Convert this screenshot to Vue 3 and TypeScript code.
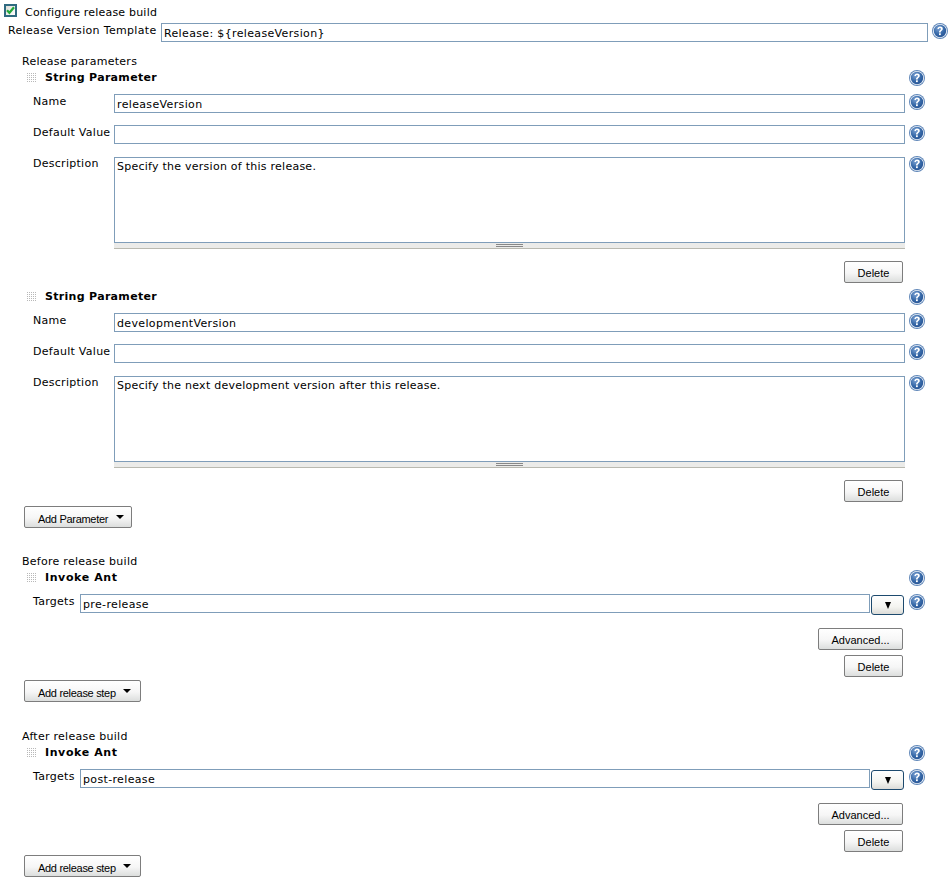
<script setup lang="ts">
interface Param { name: string; description: string }
interface Step { label: string; target: string }

const params: Param[] = [
  { name: 'releaseVersion', description: 'Specify the version of this release.' },
  { name: 'developmentVersion', description: 'Specify the next development version after this release.' },
]
const steps: Step[] = [
  { label: 'Before release build', target: 'pre-release' },
  { label: 'After release build', target: 'post-release' },
]
</script>

<template>
  <div class="page">
    <svg width="0" height="0" class="defs">
      <defs>
        <radialGradient id="helpFill" cx="38%" cy="30%" r="80%">
          <stop offset="0" stop-color="#7ba1d2" />
          <stop offset="0.55" stop-color="#386aa9" />
          <stop offset="1" stop-color="#234f90" />
        </radialGradient>
        <symbol id="help" viewBox="0 0 16 16">
          <circle cx="8" cy="8" r="8" fill="#5f86b8" />
          <circle cx="8" cy="8" r="7.1" fill="#eef3f9" />
          <circle cx="8" cy="8" r="6.2" fill="url(#helpFill)" />
          <path d="M5.4 6C5.5 4.4 6.7 3.5 8.1 3.5c1.6 0 2.7.9 2.7 2.3 0 1.1-.7 1.7-1.4 2.2-.5.4-.7.7-.7 1.4H7c0-1.1.3-1.7 1-2.2.5-.4.9-.8.9-1.3 0-.6-.3-.9-.9-.9-.7 0-1 .5-1.1 1.1z" fill="#fff" />
          <rect x="7" y="10.3" width="1.8" height="1.8" fill="#fff" />
        </symbol>
      </defs>
    </svg>

    <div class="check-row">
      <span class="checkbox">
        <svg width="9" height="9" viewBox="0 0 9 9"><path d="M1 4.2l2.4 2.6L8 1.2" fill="none" stroke="#22a838" stroke-width="2.2" /></svg>
      </span>
      <span class="check-text">Configure release build</span>
    </div>

    <div class="template-row">
      <label>Release Version Template</label>
      <input class="field" value="Release: ${releaseVersion}" />
      <svg class="help"><use href="#help" /></svg>
    </div>

    <section class="section first">
      <div class="section-label">Release parameters</div>
      <div v-for="p in params" :key="p.name" class="chunk">
        <div class="chunk-head">
          <span class="handle"></span>
          <b>String Parameter</b>
          <svg class="help"><use href="#help" /></svg>
        </div>
        <div class="form-row name">
          <label>Name</label>
          <input class="field" :value="p.name" />
          <svg class="help"><use href="#help" /></svg>
        </div>
        <div class="form-row">
          <label>Default Value</label>
          <input class="field" value="" />
          <svg class="help"><use href="#help" /></svg>
        </div>
        <div class="form-row desc">
          <label>Description</label>
          <div class="area-wrap">
            <textarea class="area" :value="p.description"></textarea>
            <div class="grip"><i></i></div>
          </div>
          <svg class="help"><use href="#help" /></svg>
        </div>
        <div class="actions">
          <button class="btn delete">Delete</button>
        </div>
      </div>
      <button class="btn add param">Add Parameter<span class="caret"></span></button>
    </section>

    <section v-for="s in steps" :key="s.label" class="section step">
      <div class="section-label">{{ s.label }}</div>
      <div class="chunk">
        <div class="chunk-head">
          <span class="handle"></span>
          <b class="ant">Invoke Ant</b>
          <svg class="help"><use href="#help" /></svg>
        </div>
        <div class="target-row">
          <label>Targets</label>
          <input class="field" :value="s.target" />
          <button class="drop"><span class="caret"></span></button>
          <svg class="help"><use href="#help" /></svg>
        </div>
        <div class="actions adv">
          <button class="btn advanced">Advanced...</button>
        </div>
        <div class="actions del">
          <button class="btn delete">Delete</button>
        </div>
      </div>
      <button class="btn add release">Add release step<span class="caret"></span></button>
    </section>
  </div>
</template>

<style>
html, body { background: #fff; }
</style>

<style scoped>
.page {
  width: 952px;
  height: 882px;
  overflow: hidden;
  position: relative;
  background: #fff;
  color: #000;
  font: 11px/14px "DejaVu Sans", Verdana, sans-serif;
  letter-spacing: 0.27px;
}
.defs { position: absolute; }
.help { width: 16px; height: 16px; flex: none; display: block; }
.check-row {
  height: 23px;
  padding: 4px 0 0 4px;
  box-sizing: border-box;
  display: flex;
  align-items: flex-start;
  gap: 8px;
  line-height: 16px;
}
.check-text { margin-top: 1px; letter-spacing: 0.2px; }
.checkbox {
  width: 13px;
  height: 13px;
  box-sizing: border-box;
  border: 2px solid #2f6a80;
  background: linear-gradient(135deg, #dcdcd6, #fff);
  display: flex;
  flex: none;
}
.checkbox svg { display: block; }
.field {
  font: 11px "DejaVu Sans", Verdana, sans-serif;
  letter-spacing: 0.35px;
  color: #000;
  border: 1px solid #7f9db9;
  height: 19px;
  box-sizing: border-box;
  padding: 2px 2px 0;
  margin: 0;
  background: #fff;
  outline: none;
  min-width: 0;
}
.template-row {
  display: flex;
  height: 19px;
  padding-left: 8px;
  width: 948px;
  box-sizing: border-box;
}
.template-row label { width: 153px; flex: none; line-height: 14px; padding-top: 1px; letter-spacing: 0.33px; }
.template-row .field { width: 767px; flex: none; }
.template-row .help { margin: 0 0 0 4px; }
.section { padding-left: 22px; width: 904px; }
.section.first { padding-top: 12px; }
.section.step { padding-top: 26px; }
.section-label { height: 15px; line-height: 14px; padding-top: 1px; box-sizing: border-box; }
.chunk { padding-left: 4px; }
.chunk-head {
  display: flex;
  align-items: center;
  height: 18px;
}
.chunk-head b { margin-left: 8px; line-height: 14px; letter-spacing: 0.31px; }
.chunk-head b.ant { letter-spacing: 0.6px; }
.chunk-head .help { margin-left: auto; position: relative; left: -1px; }
.handle {
  width: 11px;
  height: 10px;
  margin-top: -1px;
  background-image:
    repeating-linear-gradient(90deg, #fff 0 1px, transparent 1px 2px),
    repeating-linear-gradient(0deg, #fff 0 1px, #b8b8b8 1px 2px);
}
.form-row {
  display: flex;
  margin-top: 12px;
  padding-left: 7px;
}
.form-row.name { margin-top: 7px; }
.form-row.desc { margin-top: 13px; }
.form-row label { width: 81px; flex: none; line-height: 14px; padding-top: 1px; }
.form-row.desc label { padding-top: 0; }
.form-row .field { width: 791px; flex: none; }
.form-row .help { margin-left: 4px; }
.form-row.desc .help { margin-top: -1px; }
.area-wrap { width: 791px; flex: none; }
.area {
  display: block;
  width: 791px;
  height: 86px;
  box-sizing: border-box;
  border: 1px solid #7f9db9;
  padding: 2px;
  margin: 0;
  resize: none;
  outline: none;
  font: 11px/14px "DejaVu Sans", Verdana, sans-serif;
  letter-spacing: 0.25px;
  color: #000;
  background: #fff;
}
.grip {
  height: 5px;
  background: #ebebe9;
  border-bottom: 1px solid #b9b9b0;
  display: flex;
  justify-content: center;
}
.grip i {
  display: block;
  width: 27px;
  height: 3px;
  border-top: 1px solid #888;
  border-bottom: 1px solid #888;
  box-sizing: border-box;
  margin-top: 1px;
}
.actions {
  display: flex;
  justify-content: flex-end;
  width: 877px;
  margin-top: 12px;
  margin-bottom: 5px;
}
.actions.adv { margin-top: 13px; margin-bottom: 5px; }
.actions.del { margin-top: 0; margin-bottom: 3px; }
.btn {
  font: 11px "Liberation Sans", Arial, sans-serif;
  letter-spacing: 0;
  color: #000;
  height: 22px;
  box-sizing: border-box;
  border: 1px solid #7d7d7d;
  border-radius: 2px;
  padding: 2px 0 0;
  margin: 0;
  background: linear-gradient(#ffffff 0%, #f6f6f6 55%, #dcdedd 100%);
  display: block;
}
.delete { width: 59px; }
.advanced { width: 85px; }
.add {
  margin-left: 2px;
  padding: 3px 0 0 13px;
  text-align: left;
  letter-spacing: -0.3px;
  white-space: nowrap;
}
.add.param { width: 108px; margin-top: -1px; }
.add.release { width: 117px; margin-bottom: 1px; }
.add.param .caret { margin-left: 8px; }
.add.release .caret { margin-left: 7px; }
.caret {
  display: inline-block;
  width: 0;
  height: 0;
  border-left: 4px solid transparent;
  border-right: 4px solid transparent;
  border-top: 4px solid #000;
  vertical-align: 4px;
}
.target-row {
  display: flex;
  margin-top: 7px;
  padding-left: 7px;
  height: 21px;
}
.target-row label { width: 47px; flex: none; padding-top: 1px; }
.target-row .field { width: 790px; flex: none; }
.target-row .drop {
  width: 33px;
  height: 20px;
  margin: 1px 0 0 1px;
  padding: 0;
  box-sizing: border-box;
  border: 1px solid #1d4a6e;
  border-radius: 3px;
  background: linear-gradient(#fff 0%, #f4f4f0 60%, #dcdcd8 100%);
  display: flex;
  align-items: center;
  justify-content: center;
}
.target-row .drop .caret {
  margin: 1px 0 0;
  border-top-width: 7px;
  border-left-width: 3.5px;
  border-right-width: 3.5px;
}
.target-row .help { margin-left: 5px; }
</style>
